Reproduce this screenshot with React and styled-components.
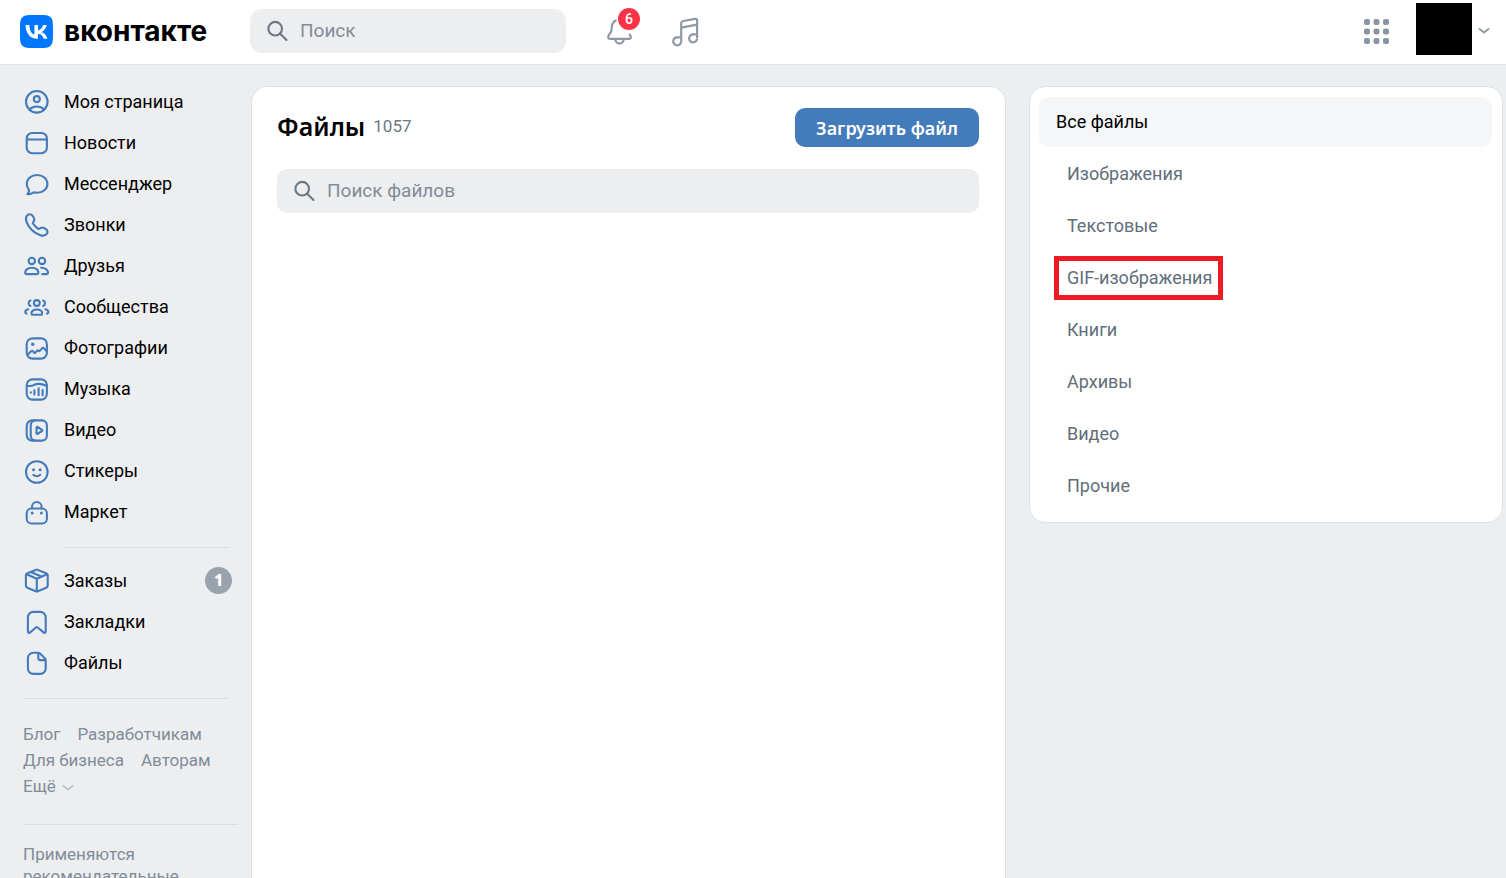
import React from "react";
import styled, { createGlobalStyle } from "styled-components";

const GlobalStyle = createGlobalStyle`
  *, *::before, *::after { box-sizing: border-box; }
  body {
    margin: 0;
    background: #edeef0;
    color: #000;
    font-family: Roboto, "Noto Sans", sans-serif;
    font-size: 18px;
  }
  a { color: inherit; text-decoration: none; }
  button, input { font: inherit; }
`;

const Page = styled.div`
  display: flex;
  flex-direction: column;
  height: 100vh;
  overflow: hidden;
`;

/* ---------- header ---------- */

const Header = styled.header`
  display: flex;
  align-items: center;
  flex: none;
  height: 65px;
  padding: 0 16px 2px 20px;
  background: #fff;
  border-bottom: 1px solid #e1e3e6;
`;

const LogoLink = styled.a`
  display: flex;
  align-items: center;
  gap: 11px;
  width: 230px;
  flex: none;
`;

const Wordmark = styled.span`
  font-family: Inter, sans-serif;
  font-size: 28px;
  font-weight: 700;
  line-height: 32px;
`;

const SearchBox = styled.label`
  display: flex;
  align-items: center;
  gap: 10px;
  flex: none;
  width: ${(p) => p.$width};
  height: 44px;
  padding: 0 16px;
  background: #edeef0;
  border-radius: ${(p) => p.$radius};
  color: #6d7885;
  svg { flex: none; }
`;

const SearchInput = styled.input`
  flex: 1;
  min-width: 0;
  padding: 0;
  border: 0;
  outline: 0;
  background: transparent;
  color: #000;
  font-size: 19px;
  line-height: 24px;
  &::placeholder { color: #818c99; opacity: 1; }
`;

const IconButton = styled.button`
  position: relative;
  display: flex;
  flex: none;
  padding: 0;
  border: 0;
  background: none;
  color: #8f99a5;
  cursor: pointer;
`;

const HeaderActions = styled.div`
  display: flex;
  align-items: center;
  gap: 37px;
  margin-top: 2px;
  margin-left: 40px;
`;

const Counter = styled.span`
  position: absolute;
  top: -10px;
  right: -6px;
  width: 22px;
  height: 22px;
  border-radius: 11px;
  background: #ff3347;
  color: #fff;
  font-size: 14px;
  font-weight: 500;
  line-height: 22px;
  text-align: center;
`;

const HeaderEnd = styled.div`
  display: flex;
  align-items: center;
  gap: 25px;
  margin-left: auto;
`;

const ProfileButton = styled(IconButton)`
  align-items: center;
  gap: 6px;
`;

const Avatar = styled.span`
  width: 56px;
  height: 52px;
  margin-bottom: 4px;
  background: #000;
`;

/* ---------- body ---------- */

const Columns = styled.div`
  display: grid;
  grid-template-columns: 228px minmax(0, 1fr) 474px;
  gap: 23px;
  flex: 1;
  min-height: 0;
  padding-right: 3px;
`;

const Sidebar = styled.div`
  padding: 16px 0 0 23px;
`;

const NavList = styled.ul`
  margin: 0;
  padding: 0;
  list-style: none;
`;

const NavLink = styled.a`
  display: flex;
  align-items: center;
  gap: 13px;
  height: 41px;
  margin-right: -4px;
  svg { color: #447bba; }
`;

const NavBadge = styled.span`
  width: 27px;
  height: 27px;
  margin-left: auto;
  border-radius: 14px;
  background: #99a2ad;
  color: #fff;
  font-family: "Noto Sans", sans-serif;
  font-size: 16px;
  font-weight: 800;
  line-height: 27px;
  text-align: center;
`;

const Divider = styled.hr`
  height: 1px;
  margin: ${(p) => p.$margin};
  border: 0;
  background: #dadce0;
`;

const FooterLinks = styled.div`
  display: flex;
  flex-wrap: wrap;
  column-gap: 17px;
  color: #818c99;
  font-size: 17px;
  line-height: 26px;
  margin-right: -10px;
`;

const MoreButton = styled.button`
  display: flex;
  align-items: center;
  gap: 6px;
  padding: 0;
  border: 0;
  background: none;
  color: inherit;
  line-height: 26px;
  svg { margin-top: 3px; color: #c0c5cc; }
`;

const Notice = styled.p`
  margin: 0;
  color: #818c99;
  font-size: 17px;
  line-height: 22px;
`;

const Card = styled.section`
  margin-top: 21px;
  background: #fff;
  border: 1px solid #dce1e6;
`;

const FilesCard = styled(Card)`
  display: flex;
  flex-direction: column;
  gap: 22px;
  padding: 21px 26px 0 25px;
  border-bottom: 0;
  border-radius: 16px 16px 0 0;
`;

const FilesHead = styled.div`
  display: flex;
  align-items: flex-start;
  justify-content: space-between;
  font-family: "Noto Sans", sans-serif;
`;

const Title = styled.h1`
  display: flex;
  align-items: center;
  gap: 8px;
  margin: 0;
  font-size: 25px;
  font-weight: 600;
  line-height: 36px;
`;

const Count = styled.span`
  color: #6d7885;
  font-family: Roboto, sans-serif;
  font-size: 17px;
  font-weight: 400;
`;

const UploadButton = styled.button`
  width: 184px;
  height: 39px;
  padding: 0;
  border: 0;
  border-radius: 10px;
  background: #447bba;
  color: #fff;
  font-size: 18px;
  font-weight: 600;
`;

const FilterCard = styled(Card)`
  align-self: start;
  padding: 10px 10px 10px 9px;
  border-radius: 16px;
`;

const FilterLink = styled.a`
  display: flex;
  align-items: center;
  height: 52px;
  padding-left: 28px;
  color: #626d7a;
  line-height: 26px;
`;

const ActiveFilter = styled(FilterLink)`
  height: 50px;
  margin-bottom: 1px;
  padding-left: 17px;
  border-radius: 10px;
  background: #f5f6f8;
  color: #000;
`;

const Marked = styled.span`
  position: relative;
  &::after {
    content: "";
    position: absolute;
    inset: -9px -11px -9px -13px;
    border: 5px solid #ed1c24;
  }
`;

/* ---------- icons ---------- */

const NavIcon = ({ children }) => (
  <svg width="28" height="28" viewBox="0 0 28 28" fill="none" stroke="currentColor"
    strokeWidth="2.1" strokeLinecap="round" strokeLinejoin="round" aria-hidden="true">
    {children}
  </svg>
);

const Dot = ({ x, y, r = 1.5 }) => <circle cx={x} cy={y} r={r} fill="currentColor" stroke="none" />;

const icons = {
  profile: (
    <>
      <circle cx="13.8" cy="13.8" r="10.8" />
      <circle cx="13.8" cy="11.1" r="3" />
      <path d="M6.4 21.400c2-1.900 4.500-2.900 7.400-2.900s5.400 1 7.400 2.900" />
    </>
  ),
  news: (
    <>
      <rect x="3.7" y="4" width="20.2" height="20.2" rx="5.5" />
      <path d="M4 10.500h19.600" />
    </>
  ),
  message: (
    <path d="M4.300 24.200c1.400-1.200 2-2.900 1.500-4.700a9 9 0 0 1-2-5.600c0-5 4.600-8.900 10.300-8.900s10.300 3.900 10.300 8.900-4.600 8.900-10.300 8.900c-1.200 0-2.300-.2-3.400-.5-1.800 1.500-3.900 2.200-6.400 1.900Z" />
  ),
  phone: (
    <path d="M4.200 4.400C5.700 2.800 8.200 2.900 9.500 4.600l1.200 1.900c.9 1.400.8 2.900-.3 4.200-.7.9-.6 1.700 0 2.500 1.200 1.600 2.600 3 4.200 4.200.8.6 1.600.7 2.500 0 1.300-1 2.800-1.200 4.200-.3l1.900 1.200c1.600 1.100 1.700 3.600.2 5-1.500 1.400-3.700 1.700-6 .9C10.800 21.900 5.900 17 3.500 10.900 2.600 8.500 2.800 6 4.200 4.400Z" />
  ),
  friends: (
    <>
      <circle cx="8.8" cy="8.9" r="3.2" />
      <circle cx="19" cy="8.9" r="3.2" />
      <path d="M8.800 15.700c-3.900 0-6.600 2.200-6.600 4.700 0 1 .7 1.700 1.800 1.700h9.600c1.100 0 1.800-.7 1.800-1.700 0-2.500-2.700-4.700-6.600-4.700Z" />
      <path d="M18.200 15.700c4 0 6.800 2.200 6.800 4.700 0 1-.7 1.700-1.800 1.700h-4" />
    </>
  ),
  groups: (
    <>
      <circle cx="13.8" cy="10" r="2.9" />
      <path d="M13.800 16.500c-3.300 0-5.400 1.600-5.400 3.800 0 1 .6 1.500 1.600 1.500h7.600c1 0 1.600-.5 1.600-1.500 0-2.200-2.100-3.800-5.400-3.800Z" />
      <path d="M7.500 7.600a2.800 2.800 0 0 0 0 5.300M20.100 7.600a2.800 2.800 0 0 1 0 5.300M5.200 16.200c-1.900.4-3 1.500-3 2.900 0 .8.500 1.400 1.400 1.500M22.400 16.200c1.900.4 3 1.500 3 2.900 0 .8-.5 1.400-1.400 1.500" />
    </>
  ),
  photos: (
    <>
      <rect x="3.7" y="4.4" width="20.2" height="20.2" rx="5.8" />
      <Dot x="9.7" y="10.3" r="1.7" />
      <path d="M4.800 20.500l3.600-3.500c.5-.4 1-.4 1.400.1l1.200 1.400c.4.5.9.5 1.400.1l2.200-2.300 1 .6c.5.3.9.2 1.300-.2l2.100-2.300c.6-.6 1.200-.7 1.800-.1l3 2.900" />
    </>
  ),
  music: (
    <>
      <rect x="3.7" y="4.4" width="20.2" height="20.2" rx="5.8" />
      <path d="M4 10.700c3.800 1 5.300.2 7.400-.9 3.500-1.800 6.500-1.400 12.300.9M11.400 15.300v4.300M15.600 13.300v6.900M19.600 15.100v5.100M7.800 17.300v.4" />
    </>
  ),
  video: (
    <>
      <rect x="7.7" y="4.4" width="16.2" height="20.2" rx="5" />
      <path d="M12 4.400H9.200a5.500 5.500 0 0 0-5.500 5.500v9.200a5.500 5.500 0 0 0 5.500 5.500H12M13.500 11.500c0-.6.600-.9 1.100-.6l4.400 2.900c.4.300.4.900 0 1.200l-4.400 2.900c-.5.300-1.100 0-1.100-.6Z" />
    </>
  ),
  stickers: (
    <>
      <circle cx="13.8" cy="15" r="10.8" />
      <Dot x="10.5" y="12.7" />
      <Dot x="17.1" y="12.7" />
      <path d="M10.400 17.800c1.900 1.800 4.900 1.800 6.800 0" />
    </>
  ),
  market: (
    <>
      <rect x="3.7" y="10.5" width="20.2" height="15" rx="4.800" />
      <path d="M9 10.300V8.800a4.800 4.800 0 0 1 9.600 0v1.500" />
      <Dot x="9.2" y="14.9" />
      <Dot x="18.4" y="14.9" />
    </>
  ),
  orders: (
    <>
      <path d="M12.700 2.900c.7-.3 1.500-.3 2.200 0l8.300 3.300c.9.400 1.500 1.100 1.500 2.100v10.200c0 1-.6 1.800-1.500 2.200l-8.300 3.500c-.7.300-1.500.3-2.200 0l-8.300-3.500c-.9-.4-1.500-1.200-1.500-2.200V8.300c0-1 .6-1.700 1.500-2.100Z" />
      <path d="M3.500 7.200l10.300 4.500 10.300-4.500M13.800 11.700v12.200M8.200 5.200l10.300 4.300" />
    </>
  ),
  bookmarks: (
    <path d="M4.900 9.300a5.400 5.400 0 0 1 5.400-5.400h7a5.400 5.400 0 0 1 5.400 5.400v14c0 1.400-1.200 2-2.200 1.100l-5.500-4.700c-.7-.6-1.700-.6-2.400 0l-5.500 4.700c-1 .9-2.200.3-2.200-1.100Z" />
  ),
  files: (
    <>
      <path d="M4.900 9.200a5.400 5.400 0 0 1 5.400-5.400h4.600c1 0 1.900.4 2.600 1.100l4.100 4.200c.7.700 1.100 1.600 1.100 2.600v7.800a5.400 5.400 0 0 1-5.400 5.400h-7a5.400 5.400 0 0 1-5.400-5.400Z" />
      <path d="M15.300 4v5c0 1.300.8 2.100 2.100 2.100h5" />
    </>
  ),
};

const VkLogo = () => (
  <svg width="33" height="33" viewBox="0 0 48 48" aria-hidden="true">
    <path fill="#07f" d="M0 23C0 12.200 0 6.700 3.400 3.400 6.700 0 12.200 0 23 0h2c10.800 0 16.300 0 19.600 3.400C48 6.700 48 12.200 48 23v2c0 10.800 0 16.300-3.400 19.600C41.300 48 35.800 48 25 48h-2c-10.800 0-16.300 0-19.600-3.400C0 41.300 0 35.800 0 25Z" />
    <path fill="#fff" d="M25.540 34.580C14.600 34.580 8.360 27.080 8.100 14.600h5.480c.18 9.160 4.220 13.040 7.420 13.840V14.600h5.160v7.900c3.160-.34 6.480-3.940 7.600-7.900h5.160c-.86 4.880-4.460 8.480-7.020 9.960 2.560 1.200 6.660 4.340 8.220 10.020h-5.680c-1.220-3.800-4.260-6.740-8.280-7.140v7.140Z" />
  </svg>
);

const SearchIcon = () => (
  <svg width="24" height="24" viewBox="0 0 24 24" fill="none" stroke="currentColor" strokeWidth="2.1" strokeLinecap="round" aria-hidden="true">
    <circle cx="9.200" cy="9.700" r="6.800" />
    <path d="M14.200 14.700l6.300 6.300" />
  </svg>
);

const BellIcon = () => (
  <svg width="28" height="28" viewBox="0 0 28 28" fill="none" stroke="currentColor" strokeWidth="2.2" strokeLinecap="round" strokeLinejoin="round" aria-hidden="true">
    <path d="M9.800 2.600C7 4 5.800 6.600 5.800 9.700c0 3.800-.8 5-2.500 6.900-1.500 1.700-1.700 4.200 1 4.200h18.400c2.700 0 2.500-2.500 1-4.200" />
    <path d="M9.300 21.200a4.200 4.200 0 0 0 8.400 0" />
  </svg>
);

const NotesIcon = () => (
  <svg width="28" height="30" viewBox="0 0 28 30" fill="none" stroke="currentColor" strokeWidth="2.2" strokeLinejoin="round" aria-hidden="true">
    <path d="M10.200 24.200V6.300c0-1.200.7-2 1.900-2.300l12-2.200c1.200-.2 2 .4 2 1.600v17.800" />
    <path d="M10.200 10.600L26.100 7.700" />
    <path d="M10.200 20.300H6.300a4 4 0 1 0 3.900 4M26.100 17.400h-3.900a4 4 0 1 0 3.900 4" />
  </svg>
);

const GridIcon = () => (
  <svg width="27" height="27" viewBox="0 0 27 27" fill="#8b95a1" aria-hidden="true">
    {[1, 10.5, 20].map((y) => [0, 9.5, 19].map((x) => <rect key={`${x}-${y}`} x={x} y={y} width="6" height="6" rx="2" />))}
  </svg>
);

const Chevron = () => (
  <svg width="12" height="8" viewBox="0 0 12 8" fill="none" stroke="currentColor" strokeWidth="2" strokeLinecap="round" strokeLinejoin="round" aria-hidden="true">
    <path d="M1.500 2L6 5.500 10.500 2" />
  </svg>
);

/* ---------- data ---------- */

const mainNav = [
  ["profile", "Моя страница"],
  ["news", "Новости"],
  ["message", "Мессенджер"],
  ["phone", "Звонки"],
  ["friends", "Друзья"],
  ["groups", "Сообщества"],
  ["photos", "Фотографии"],
  ["music", "Музыка"],
  ["video", "Видео"],
  ["stickers", "Стикеры"],
  ["market", "Маркет"],
];

const extraNav = [
  ["orders", "Заказы", 1],
  ["bookmarks", "Закладки"],
  ["files", "Файлы"],
];

const filters = ["Изображения", "Текстовые", "GIF-изображения", "Книги", "Архивы", "Видео", "Прочие"];

const Nav = ({ items }) => (
  <NavList>
    {items.map(([icon, label, badge]) => (
      <li key={icon}>
        <NavLink href="#">
          <NavIcon>{icons[icon]}</NavIcon>
          {label}
          {badge && <NavBadge>{badge}</NavBadge>}
        </NavLink>
      </li>
    ))}
  </NavList>
);

const SearchField = ({ placeholder, width, radius }) => (
  <SearchBox $width={width} $radius={radius}>
    <SearchIcon />
    <SearchInput type="text" placeholder={placeholder} aria-label={placeholder} />
  </SearchBox>
);

export default function App() {
  return (
    <Page>
      <GlobalStyle />
      <Header>
        <LogoLink href="#">
          <VkLogo />
          <Wordmark>вконтакте</Wordmark>
        </LogoLink>
        <SearchField placeholder="Поиск" width="316px" radius="12px" />
        <HeaderActions>
          <IconButton type="button" aria-label="Уведомления">
            <BellIcon />
            <Counter>6</Counter>
          </IconButton>
          <IconButton type="button" aria-label="Музыка">
            <NotesIcon />
          </IconButton>
        </HeaderActions>
        <HeaderEnd>
          <IconButton type="button" aria-label="Сервисы">
            <GridIcon />
          </IconButton>
          <ProfileButton type="button" aria-label="Профиль">
            <Avatar />
            <Chevron />
          </ProfileButton>
        </HeaderEnd>
      </Header>
      <Columns>
        <Sidebar>
          <nav>
            <Nav items={mainNav} />
            <Divider $margin="15px 0 12px 41px" />
            <Nav items={extraNav} />
          </nav>
          <Divider $margin="15px 0 22px" />
          <FooterLinks>
            <a href="#">Блог</a>
            <a href="#">Разработчикам</a>
            <a href="#">Для бизнеса</a>
            <a href="#">Авторам</a>
            <MoreButton type="button">
              Ещё <Chevron />
            </MoreButton>
          </FooterLinks>
          <Divider $margin="25px -10px 18px 0" />
          <Notice>Применяются рекомендательные</Notice>
        </Sidebar>
        <FilesCard as="main">
          <FilesHead>
            <Title>
              Файлы <Count>1057</Count>
            </Title>
            <UploadButton type="button">Загрузить файл</UploadButton>
          </FilesHead>
          <SearchField placeholder="Поиск файлов" width="100%" radius="10px" />
        </FilesCard>
        <FilterCard as="nav">
          <ActiveFilter href="#">Все файлы</ActiveFilter>
          {filters.map((name) => (
            <FilterLink href="#" key={name}>
              {name === "GIF-изображения" ? <Marked>{name}</Marked> : name}
            </FilterLink>
          ))}
        </FilterCard>
      </Columns>
    </Page>
  );
}
